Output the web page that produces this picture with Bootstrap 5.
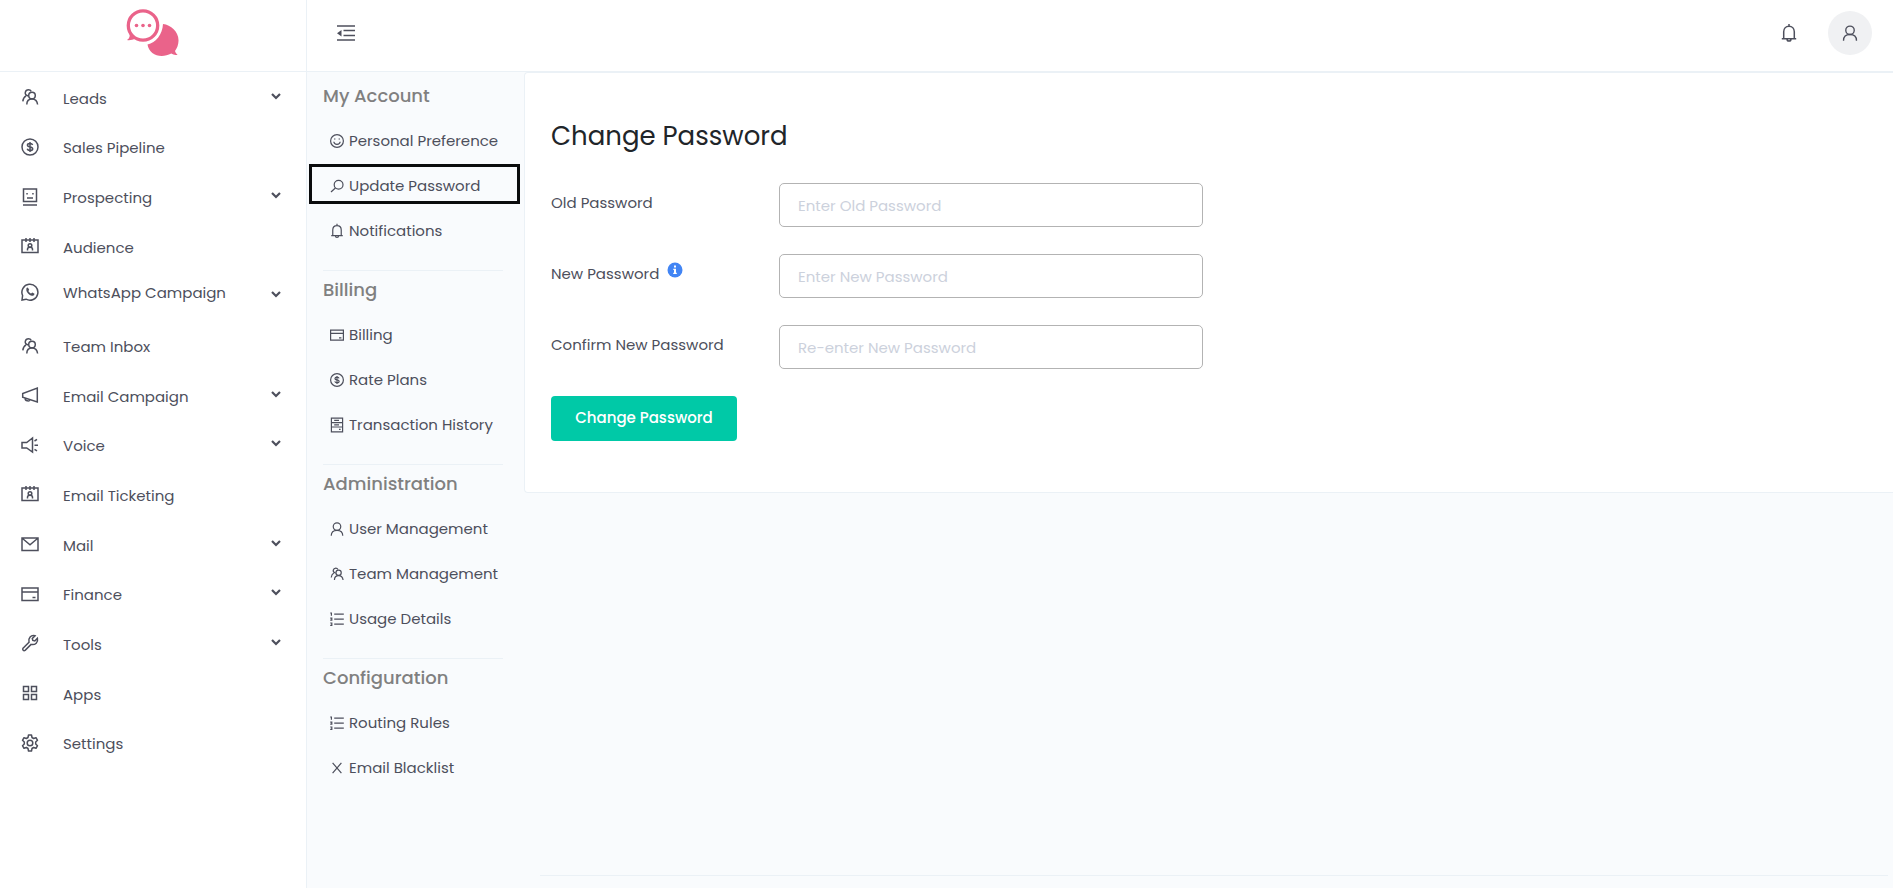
<!DOCTYPE html>
<html lang="en">
<head>
<meta charset="utf-8">
<meta name="viewport" content="width=device-width, initial-scale=1">
<title>Change Password</title>
<link href="https://cdn.jsdelivr.net/npm/bootstrap@5.3.0/dist/css/bootstrap.min.css" rel="stylesheet">
<style>
:root{--line:#ebf1f6;--ink:#4d4f5c}
body{font-family:Poppins,Inter,sans-serif;font-size:15px;line-height:24px;color:var(--ink);background:#f9fbfd}
a{color:inherit;text-decoration:none}
svg{display:block;flex:none;fill:none;stroke:currentColor;stroke-width:1.5}
.defs{display:none}
.topbar{height:72px;border-bottom:1px solid var(--line)}
.brand{width:307px;border-right:1px solid var(--line);color:#ea638a}
.tool-btn{background:none;border:0;padding:0;color:var(--ink)}
.tools{padding:0 21px 6px 30px}
.tools-end{gap:29px}
.avatar{width:44px;height:44px;background:#f0f1f3}
.side{width:307px;border-right:1px solid var(--line)}
.menu{display:grid;grid-auto-rows:1fr;height:695px;margin:1px 0 0}
.menu li{padding:0 24px 0 20px}
.menu a{gap:23px;padding-top:2px}
.menu a svg{width:20px;height:20px;margin-bottom:3px}
.menu .raised{padding-bottom:8px}
.chev{width:12px;height:12px;stroke-width:2.2;margin-bottom:4px}
.sub{width:217px;padding:5px 4px 0 2px}
.sub h2{font-size:18px;line-height:24px;font-weight:500;color:#808080;margin:0;padding:7px 0 11px 14px}
.sub ul{margin:0 0 21px}
.sub li{margin-bottom:5px}
.sub a{gap:4px;height:40px;padding:3px 0 0 17px;border:3px solid transparent;white-space:nowrap}
.sub a.current{border-color:#0b0c0d}
.sub a svg{width:16px;height:16px}
.sub hr{margin:0 17px 0 14px;border-color:var(--line);opacity:1}
.panel{border:1px solid var(--line);border-right:0;border-radius:4px 0 0 4px}
.panel .card-body{padding:45px 6px 51px 26px}
.panel h1{font-size:26px;line-height:36px;font-weight:400;color:#212529;margin:0 0 29px}
.field{--bs-gutter-x:32px;margin-bottom:27px}
.field label{padding-top:8px}
.field .form-control{height:44px;font-size:15px;padding:0 18px;border:1px solid #b3b3b3;border-radius:5px}
.field .form-control::placeholder{color:#ccd1dc}
.save{background:#00c9a7;color:#fff;font-size:15px;font-weight:500;height:45px;width:186px;border-radius:4px;padding:0}
.save:hover{background:#00b798;color:#fff}
.foot{border-top:1px solid var(--line);height:13px;margin:0 5px 0 16px}
</style>
</head>
<body class="min-vh-100 d-flex flex-column">
<svg class="defs" aria-hidden="true">
<defs>
<symbol id="team" viewBox="0 0 20 20"><circle cx="12" cy="8.500" r="3.300"/><path d="M6.800 17.500c0-3.300 1.700-5.500 5.200-5.500s5.200 2.200 5.600 5.500M8.300 9C6 8.300 5 6.800 5.300 5.300 5.700 3.500 7 2.700 8.500 2.700c1.300 0 2.200.6 2.700 1.700M6 8.800c-2 1.200-2.900 2.700-3.200 5.500"/></symbol>
<symbol id="dollar" viewBox="0 0 20 20"><circle cx="10" cy="10" r="8"/><path d="M12.600 8c-.3-1-1.200-1.500-2.600-1.500-3.300 0-3.500 3 0 3.400 3.700.5 3.500 3.600 0 3.600-1.600 0-2.500-.6-2.800-1.700M10 5v10"/></symbol>
<symbol id="face" viewBox="0 0 20 20"><path d="M3.500 2h13v12.500h-13zM3 18h14M7 11h6M6.300 6.800h1.500M12.200 6.800h1.500"/></symbol>
<symbol id="cal" viewBox="0 0 20 20"><path d="M2 4h16v12.500H2zM6 2v4M10 2v4M14 2v4M7.500 14.500v-1.300c0-1.200 1-2 2.500-2s2.500.8 2.500 2v1.300"/><circle cx="10" cy="9.500" r="1.800"/></symbol>
<symbol id="wa" viewBox="0 0 20 20"><path d="M2 18l.6-4.500A8 8 0 1 1 6 17.200z"/><path d="M6.500 6l1.300-.6 1.400 2.400-.8 1.200c.7 1.400 1.500 2 2.700 2.600l1.200-1 2.200 1.200c-.2 1.700-1.400 2.200-2.500 2-3-.6-5.600-3.500-5.700-6z" fill="currentColor" stroke="none"/></symbol>
<symbol id="horn" viewBox="0 0 20 20"><path d="M17.300 3v14L2.700 12.300V8.500zM5 13c0 3.500 4.500 3.500 5 1.800"/></symbol>
<symbol id="voice" viewBox="0 0 20 20"><path d="M12.500 3v14L6.700 13H2V7.500h4.700zM14.500 10.200H18M14.500 6l2.500-1.600M14.500 14.300l2.500 1.600"/></symbol>
<symbol id="mail" viewBox="0 0 20 20"><path d="M2 4h16v12.500H2zM2.500 4.500L10 10.800l7.500-6.300"/></symbol>
<symbol id="bank-card" viewBox="0 0 20 20"><path d="M2 4h16v12.500H2zM2 8h16M12.500 13.500h3"/></symbol>
<symbol id="wrench" viewBox="0 0 20 20"><path d="M3 15.200l6-6C8 5 11 1.700 15 2.800L12.300 5.500l.5 2 2 .5 2.600-2.700c1 4-2.100 7-6.300 6.100l-6 6c-1.500.9-3-.7-2.100-2.200z"/></symbol>
<symbol id="apps" viewBox="0 0 20 20"><path d="M3.500 3.500h5v5h-5zM11.500 3.500h5v5h-5zM3.500 11.500h5v5h-5zM11.500 11.500h5v5h-5z"/></symbol>
<symbol id="gear" viewBox="0 0 20 20"><circle cx="10" cy="10" r="2.800"/><path d="M8 4.500L8.500 2h3l.5 2.500 1.600 1L16 4.700l1.500 2.600L15.700 9v2l1.800 1.700-1.500 2.600-2.400-.8-1.600 1-.5 2.500h-3L8 15.500l-1.600-1-2.400.8-1.500-2.600L4.300 11V9L2.500 7.300 4 4.700l2.400.8z" stroke-linejoin="round"/></symbol>
<symbol id="chev" viewBox="0 0 12 12"><path d="M2 4l4 4 4-4"/></symbol>
<symbol id="smile" viewBox="0 0 20 20"><circle cx="10" cy="10" r="8"/><path d="M6 11c.5 4.300 7.500 4.300 8 0M6.300 7.500h1.700M12 7.500h1.700"/></symbol>
<symbol id="key" viewBox="0 0 20 20"><circle cx="12" cy="8.500" r="5.500"/><path d="M8 12.500L2.500 17.500"/></symbol>
<symbol id="bell" viewBox="0 0 20 20"><path d="M4.700 15.500V8.800c0-3.300 2.300-5.600 5.300-5.600s5.300 2.300 5.300 5.600v6.700M2.800 15.700h14.400M10 1v2M8 16c0 2.800 4 2.800 4 0"/></symbol>
<symbol id="sheet" viewBox="0 0 20 20"><path d="M3 1.500h14v17H3zM3 7h14M3 12.500h14M6.500 4.300h6M6.500 9.800h6M12.500 15.500h2"/></symbol>
<symbol id="user" viewBox="0 0 20 20"><circle cx="10" cy="7" r="4.700"/><path d="M2.800 18.500c0-4.500 2.300-6.800 7.200-6.800s7.200 2.300 7.200 6.800"/></symbol>
<symbol id="list" viewBox="0 0 20 20"><path d="M6.500 4h12M6.500 10.200h12M6.500 16.500h12M1.500 2.500h1.500v3.500M1.500 9h2v2.500h-2M1.500 15h2v3h-2"/></symbol>
<symbol id="cross" viewBox="0 0 20 20"><path d="M4.500 3.500l11 13M15.500 3.500l-11 13"/></symbol>
</defs>
</svg>

<header class="topbar bg-white d-flex">
  <a href="#" class="brand d-flex justify-content-center" aria-label="Home">
    <svg width="56" height="50" viewBox="0 0 56 50" class="mt-2">
      <path fill="currentColor" stroke="none" d="M38 16c8 1 16 8 15.500 17-.1 4-1.500 7-3.500 10 .6 2 1.400 3 2.600 3.700-2.300.6-4.500.1-6.300-1.200C36 51 24 47 22.500 36.500 31 34.500 37.500 26.500 38 16z"/>
      <circle cx="18" cy="17.500" r="14.700" stroke-width="3.300" style="stroke-width:3.300"/>
      <path fill="currentColor" stroke="none" d="M4.500 24l6 6.500c-3 1.500-6 2-8.500 1.500 2.500-1.300 3.300-4 2.500-8z"/>
      <g fill="currentColor" stroke="none"><circle cx="11.500" cy="17.500" r="1.800"/><circle cx="18" cy="17.500" r="1.800"/><circle cx="24.500" cy="17.500" r="1.800"/></g>
    </svg>
  </a>
  <div class="tools flex-grow-1 d-flex align-items-center justify-content-between">
    <button class="tool-btn" type="button" aria-label="Collapse menu">
      <svg width="18" height="18" viewBox="0 0 18 18"><path d="M0 2h18M6.500 6.500H18M6.500 11.500H18M0 16h18"/><path d="M4.500 6v6.500L0 9.200z" fill="currentColor" stroke="none"/></svg>
    </button>
    <div class="tools-end d-flex align-items-center">
      <button class="tool-btn" type="button" aria-label="Notifications"><svg width="20" height="20"><use href="#bell"/></svg></button>
      <button class="tool-btn avatar rounded-circle d-flex align-items-center justify-content-center" type="button" aria-label="Profile"><svg width="18" height="18"><use href="#user"/></svg></button>
    </div>
  </div>
</header>

<div class="d-flex flex-grow-1">
  <nav class="side bg-white flex-shrink-0" aria-label="Main">
    <ul class="menu list-unstyled">
      <li class="d-flex align-items-center justify-content-between"><a href="#" class="d-flex align-items-center"><svg><use href="#team"/></svg>Leads</a><svg class="chev"><use href="#chev"/></svg></li>
      <li class="d-flex align-items-center"><a href="#" class="d-flex align-items-center"><svg><use href="#dollar"/></svg>Sales Pipeline</a></li>
      <li class="d-flex align-items-center justify-content-between"><a href="#" class="d-flex align-items-center"><svg><use href="#face"/></svg>Prospecting</a><svg class="chev"><use href="#chev"/></svg></li>
      <li class="d-flex align-items-center"><a href="#" class="d-flex align-items-center"><svg><use href="#cal"/></svg>Audience</a></li>
      <li class="d-flex align-items-center justify-content-between"><a href="#" class="raised d-flex align-items-center"><svg><use href="#wa"/></svg>WhatsApp Campaign</a><svg class="chev"><use href="#chev"/></svg></li>
      <li class="d-flex align-items-center"><a href="#" class="d-flex align-items-center"><svg><use href="#team"/></svg>Team Inbox</a></li>
      <li class="d-flex align-items-center justify-content-between"><a href="#" class="d-flex align-items-center"><svg><use href="#horn"/></svg>Email Campaign</a><svg class="chev"><use href="#chev"/></svg></li>
      <li class="d-flex align-items-center justify-content-between"><a href="#" class="d-flex align-items-center"><svg><use href="#voice"/></svg>Voice</a><svg class="chev"><use href="#chev"/></svg></li>
      <li class="d-flex align-items-center"><a href="#" class="d-flex align-items-center"><svg><use href="#cal"/></svg>Email Ticketing</a></li>
      <li class="d-flex align-items-center justify-content-between"><a href="#" class="d-flex align-items-center"><svg><use href="#mail"/></svg>Mail</a><svg class="chev"><use href="#chev"/></svg></li>
      <li class="d-flex align-items-center justify-content-between"><a href="#" class="d-flex align-items-center"><svg><use href="#bank-card"/></svg>Finance</a><svg class="chev"><use href="#chev"/></svg></li>
      <li class="d-flex align-items-center justify-content-between"><a href="#" class="d-flex align-items-center"><svg><use href="#wrench"/></svg>Tools</a><svg class="chev"><use href="#chev"/></svg></li>
      <li class="d-flex align-items-center"><a href="#" class="d-flex align-items-center"><svg><use href="#apps"/></svg>Apps</a></li>
      <li class="d-flex align-items-center"><a href="#" class="d-flex align-items-center"><svg><use href="#gear"/></svg>Settings</a></li>
    </ul>
  </nav>

  <nav class="sub flex-shrink-0" aria-label="Settings">
    <h2>My Account</h2>
    <ul class="list-unstyled">
      <li><a href="#" class="d-flex align-items-center"><svg><use href="#smile"/></svg>Personal Preference</a></li>
      <li><a href="#" class="current d-flex align-items-center" aria-current="page"><svg><use href="#key"/></svg>Update Password</a></li>
      <li><a href="#" class="d-flex align-items-center"><svg><use href="#bell"/></svg>Notifications</a></li>
    </ul>
    <hr>
    <h2>Billing</h2>
    <ul class="list-unstyled">
      <li><a href="#" class="d-flex align-items-center"><svg><use href="#bank-card"/></svg>Billing</a></li>
      <li><a href="#" class="d-flex align-items-center"><svg><use href="#dollar"/></svg>Rate Plans</a></li>
      <li><a href="#" class="d-flex align-items-center"><svg><use href="#sheet"/></svg>Transaction History</a></li>
    </ul>
    <hr>
    <h2>Administration</h2>
    <ul class="list-unstyled">
      <li><a href="#" class="d-flex align-items-center"><svg><use href="#user"/></svg>User Management</a></li>
      <li><a href="#" class="d-flex align-items-center"><svg><use href="#team"/></svg>Team Management</a></li>
      <li><a href="#" class="d-flex align-items-center"><svg><use href="#list"/></svg>Usage Details</a></li>
    </ul>
    <hr>
    <h2>Configuration</h2>
    <ul class="list-unstyled">
      <li><a href="#" class="d-flex align-items-center"><svg><use href="#list"/></svg>Routing Rules</a></li>
      <li><a href="#" class="d-flex align-items-center"><svg><use href="#cross"/></svg>Email Blacklist</a></li>
    </ul>
  </nav>

  <main class="flex-grow-1 d-flex flex-column justify-content-between">
    <section class="panel card">
      <form class="card-body">
        <h1>Change Password</h1>
        <div class="row field">
          <div class="col-2"><label for="old">Old Password</label></div>
          <div class="col-4"><input id="old" type="password" class="form-control" placeholder="Enter Old Password"></div>
        </div>
        <div class="row field">
          <div class="col-2 d-flex align-items-start gap-2"><label for="new">New Password</label>
            <svg width="16" height="16" viewBox="0 0 16 16" class="mt-2" role="img" aria-label="Password rules"><circle cx="8" cy="8" r="7.500" fill="#4285f4" stroke="none"/><path d="M7 3.500h2v2H7zM6.300 6.700H9v4h.8V12H6.200v-1.300H7V8h-.7z" fill="#fff" stroke="none"/></svg></div>
          <div class="col-4"><input id="new" type="password" class="form-control" placeholder="Enter New Password"></div>
        </div>
        <div class="row field">
          <div class="col-2"><label for="again">Confirm New Password</label></div>
          <div class="col-4"><input id="again" type="password" class="form-control" placeholder="Re-enter New Password"></div>
        </div>
        <button class="btn save" type="submit">Change Password</button>
      </form>
    </section>
    <footer class="foot"></footer>
  </main>
</div>
<script src="https://cdn.jsdelivr.net/npm/bootstrap@5.3.0/dist/js/bootstrap.bundle.min.js"></script>
</body>
</html>
